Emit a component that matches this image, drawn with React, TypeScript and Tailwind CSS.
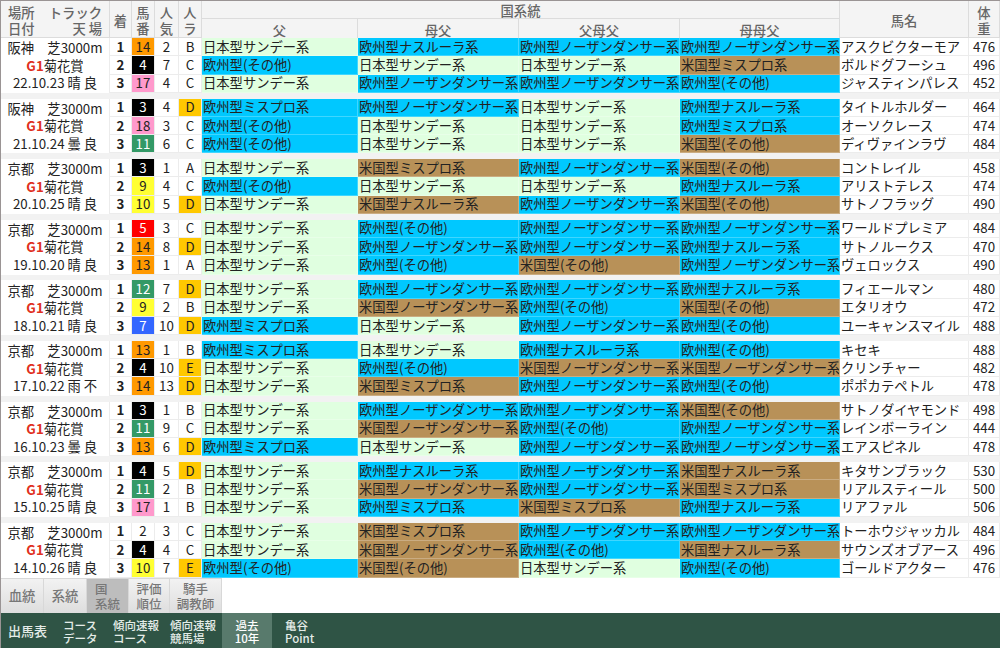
import { clsx } from 'clsx';

type LineKey = 'js' | 'en' | 'em' | 'eh' | 'eo' | 'am' | 'an' | 'ah' | 'ao';

const LINES: Record<LineKey, { label: string; bg: string }> = {
  js: { label: '日本型サンデー系', bg: 'bg-[#e0ffe0]' },
  en: { label: '欧州型ノーザンダンサー系', bg: 'bg-[#00c8ff]' },
  em: { label: '欧州型ミスプロ系', bg: 'bg-[#00c8ff]' },
  eh: { label: '欧州型ナスルーラ系', bg: 'bg-[#00c8ff]' },
  eo: { label: '欧州型(その他)', bg: 'bg-[#00c8ff]' },
  am: { label: '米国型ミスプロ系', bg: 'bg-[#b89158]' },
  an: { label: '米国型ノーザンダンサー系', bg: 'bg-[#b89158]' },
  ah: { label: '米国型ナスルーラ系', bg: 'bg-[#b89158]' },
  ao: { label: '米国型(その他)', bg: 'bg-[#b89158]' },
};

const WAKU: Record<string, string> = {
  w: 'bg-white text-[#222]',
  k: 'bg-black text-white',
  r: 'bg-[#ff0000] text-white',
  b: 'bg-[#3366ff] text-white',
  y: 'bg-[#ffff33] text-[#222]',
  g: 'bg-[#339966] text-white',
  o: 'bg-[#ff9900] text-[#222]',
  p: 'bg-[#ff99cc] text-[#222]',
};

interface Horse {
  num: number;
  waku: string;
  pop: number;
  rank: string;
  lines: [LineKey, LineKey, LineKey, LineKey];
  name: string;
  weight: number;
}

interface Race {
  place: string;
  date: string;
  horses: Horse[];
}

const h = (
  num: number,
  waku: string,
  pop: number,
  rank: string,
  a: LineKey,
  b: LineKey,
  c: LineKey,
  d: LineKey,
  name: string,
  weight: number,
): Horse => ({ num, waku, pop, rank, lines: [a, b, c, d], name, weight });

const RACES: Race[] = [
  {
    place: '阪神',
    date: '22.10.23 晴 良',
    horses: [
      h(14, 'o', 2, 'B', 'js', 'eh', 'en', 'en', 'アスクビクターモア', 476),
      h(4, 'k', 7, 'C', 'eo', 'js', 'js', 'am', 'ボルドグフーシュ', 496),
      h(17, 'p', 4, 'C', 'js', 'en', 'en', 'eo', 'ジャスティンパレス', 452),
    ],
  },
  {
    place: '阪神',
    date: '21.10.24 曇 良',
    horses: [
      h(3, 'k', 4, 'D', 'em', 'en', 'js', 'eh', 'タイトルホルダー', 464),
      h(18, 'p', 3, 'C', 'eo', 'js', 'js', 'em', 'オーソクレース', 474),
      h(11, 'g', 6, 'C', 'eo', 'js', 'js', 'ao', 'ディヴァインラヴ', 484),
    ],
  },
  {
    place: '京都',
    date: '20.10.25 晴 良',
    horses: [
      h(3, 'k', 1, 'A', 'js', 'am', 'en', 'ao', 'コントレイル', 458),
      h(9, 'y', 4, 'C', 'eo', 'js', 'js', 'eh', 'アリストテレス', 474),
      h(10, 'y', 5, 'D', 'js', 'ah', 'en', 'ao', 'サトノフラッグ', 490),
    ],
  },
  {
    place: '京都',
    date: '19.10.20 晴 良',
    horses: [
      h(5, 'r', 3, 'C', 'js', 'eo', 'en', 'en', 'ワールドプレミア', 484),
      h(14, 'o', 8, 'D', 'js', 'en', 'en', 'eh', 'サトノルークス', 470),
      h(13, 'o', 1, 'A', 'js', 'eo', 'ao', 'en', 'ヴェロックス', 490),
    ],
  },
  {
    place: '京都',
    date: '18.10.21 晴 良',
    horses: [
      h(12, 'g', 7, 'D', 'js', 'en', 'en', 'eh', 'フィエールマン', 480),
      h(9, 'y', 2, 'B', 'js', 'an', 'eo', 'ao', 'エタリオウ', 472),
      h(7, 'b', 10, 'D', 'em', 'js', 'en', 'eo', 'ユーキャンスマイル', 488),
    ],
  },
  {
    place: '京都',
    date: '17.10.22 雨 不',
    horses: [
      h(13, 'o', 1, 'B', 'em', 'js', 'eh', 'eo', 'キセキ', 488),
      h(4, 'k', 10, 'E', 'js', 'eo', 'an', 'an', 'クリンチャー', 482),
      h(14, 'o', 13, 'D', 'js', 'am', 'en', 'eo', 'ポポカテペトル', 478),
    ],
  },
  {
    place: '京都',
    date: '16.10.23 曇 良',
    horses: [
      h(3, 'k', 1, 'B', 'js', 'en', 'en', 'ao', 'サトノダイヤモンド', 498),
      h(11, 'g', 9, 'C', 'js', 'an', 'eo', 'en', 'レインボーライン', 444),
      h(13, 'o', 6, 'D', 'em', 'js', 'en', 'en', 'エアスピネル', 478),
    ],
  },
  {
    place: '京都',
    date: '15.10.25 晴 良',
    horses: [
      h(4, 'k', 5, 'D', 'js', 'eh', 'en', 'ah', 'キタサンブラック', 530),
      h(11, 'g', 2, 'B', 'js', 'an', 'en', 'am', 'リアルスティール', 500),
      h(17, 'p', 1, 'B', 'js', 'em', 'am', 'eh', 'リアファル', 506),
    ],
  },
  {
    place: '京都',
    date: '14.10.26 晴 良',
    horses: [
      h(2, 'w', 3, 'C', 'js', 'am', 'en', 'en', 'トーホウジャッカル', 484),
      h(4, 'k', 4, 'C', 'js', 'an', 'eo', 'ah', 'サウンズオブアース', 496),
      h(10, 'y', 7, 'E', 'eo', 'ao', 'js', 'eo', 'ゴールドアクター', 476),
    ],
  },
];

const COLS = 'grid grid-cols-[109px_22px_23px_24px_23px_156px_161px_161px_160px_129px_31px]';
const CELL = 'flex items-center justify-center border-b border-r border-[#ececec]';
const HEAD = 'flex flex-col items-center justify-center border-b border-r border-[#dcdcdc] pt-[3px] leading-[16px]';

function Header() {
  return (
    <div className={clsx(COLS, 'h-[37px] bg-[#f4f4f4] text-[13.3px] font-medium text-[#666]')}>
      <div className="flex flex-col justify-center border-b border-r border-[#dcdcdc] px-[7px] pt-[3px] leading-[16px]">
        <div className="flex justify-between">
          <span>場所</span>
          <span>トラック</span>
        </div>
        <div className="flex justify-between">
          <span>日付</span>
          <span>天 場</span>
        </div>
      </div>
      <div className={HEAD}>着</div>
      <div className={HEAD}>
        <span>馬</span>
        <span>番</span>
      </div>
      <div className={HEAD}>
        <span>人</span>
        <span>気</span>
      </div>
      <div className={HEAD}>
        <span>人</span>
        <span>ラ</span>
      </div>
      <div className="col-span-4 flex flex-col">
        <div className="flex h-[18px] items-center justify-center border-b border-r border-[#dcdcdc] pt-[2px]">国系統</div>
        <div className="grid h-[19px] grid-cols-[156px_161px_161px_160px]">
          {['父', '母父', '父母父', '母母父'].map((label) => (
            <div key={label} className="flex items-center justify-center border-b border-r border-[#dcdcdc] pt-[2px]">
              {label}
            </div>
          ))}
        </div>
      </div>
      <div className={HEAD}>馬名</div>
      <div className={HEAD}>
        <span>体</span>
        <span>重</span>
      </div>
    </div>
  );
}

function RaceBlock({ race }: { race: Race }) {
  return (
    <div className={clsx(COLS, 'h-[54.75px] grid-rows-3 bg-white')}>
      <div className="row-span-3 flex flex-col items-center justify-center border-r border-[#ececec] leading-[17.5px]">
        <div>{race.place}　芝3000m</div>
        <div>
          <span className="font-bold text-[#e0301e]">G1</span>菊花賞
        </div>
        <div>{race.date}</div>
      </div>
      {race.horses.map((horse, i) => (
        <div key={horse.name} className="contents">
          <div className={clsx(CELL, 'font-bold')}>{i + 1}</div>
          <div className={clsx(CELL, WAKU[horse.waku])}>{horse.num}</div>
          <div className={CELL}>{horse.pop}</div>
          <div className={clsx(CELL, (horse.rank === 'D' || horse.rank === 'E') && 'bg-[#ffc800]')}>{horse.rank}</div>
          {horse.lines.map((key, j) => (
            <div
              key={j}
              className={clsx(
                'flex items-center overflow-hidden whitespace-nowrap border-b border-r border-white/25 pl-px',
                LINES[key].bg,
              )}
            >
              {LINES[key].label}
            </div>
          ))}
          <div className={clsx(CELL, 'justify-start whitespace-nowrap pl-px')}>{horse.name}</div>
          <div className={CELL}>{horse.weight}</div>
        </div>
      ))}
    </div>
  );
}

function Tabs() {
  const tabs = [
    { lines: ['血統'], w: 'w-[43px]' },
    { lines: ['系統'], w: 'w-[43px]' },
    { lines: ['国', '系統'], w: 'w-[42px]', active: true },
    { lines: ['評価', '順位'], w: 'w-[41px]' },
    { lines: ['騎手', '調教師'], w: 'w-[52px]' },
  ];
  return (
    <div className="flex h-[36px] bg-white">
      {tabs.map((tab) => (
        <div
          key={tab.lines.join('')}
          className={clsx(
            'flex flex-col items-center justify-center border-r border-t border-[#d8d8d8] font-medium leading-[15px] text-[#777]',
            tab.lines.length > 1 ? 'text-[12.5px]' : 'text-[13.3px]',
            tab.w,
            tab.active ? 'bg-[#bdbdbd]' : 'bg-gradient-to-b from-[#f2f2f2] to-[#dedede]',
          )}
        >
          {tab.lines.map((line) => (
            <span key={line} className={tab.active && line === '国' ? 'self-start pl-2' : undefined}>
              {line}
            </span>
          ))}
        </div>
      ))}
    </div>
  );
}

function Footer() {
  const items = [
    { lines: ['コース', 'データ'], w: 'w-[64px]', pl: 'pl-[14px]' },
    { lines: ['傾向速報', 'コース'], w: 'w-[57px]' },
    { lines: ['傾向速報', '競馬場'], w: 'w-[52px]' },
    { lines: ['過去', '10年'], w: 'w-[50px]', active: true },
    { lines: ['亀谷', 'Point'], w: 'w-[60px]', pl: 'pl-[13px]' },
  ];
  return (
    <div className="flex h-[35px] items-stretch bg-[#2f5445] text-[#e4ece8]">
      <div className="flex w-[48px] items-center pl-[7px] text-[13px] font-medium">出馬表</div>
      {items.map((item) => (
        <div
          key={item.lines.join('')}
          className={clsx(
            'flex flex-col justify-center pt-[2px] text-[11.5px] font-medium leading-[13px]',
            item.w,
            item.pl,
            item.active ? 'items-center bg-[#587a6c] text-white' : 'items-start',
          )}
        >
          {item.lines.map((line) => (
            <span key={line}>{line}</span>
          ))}
        </div>
      ))}
    </div>
  );
}

export default function App() {
  return (
    <div className="flex h-[648px] w-[1000px] flex-col overflow-hidden border-l border-t border-[#9a9494] bg-[#f2f2f2] font-['Noto_Sans_CJK_JP',sans-serif] text-[13.3px] text-[#222]">
      <Header />
      <div className="flex h-[540px] flex-col gap-[5.85px]">
        {RACES.map((race) => (
          <RaceBlock key={race.date} race={race} />
        ))}
      </div>
      <Tabs />
      <Footer />
    </div>
  );
}
